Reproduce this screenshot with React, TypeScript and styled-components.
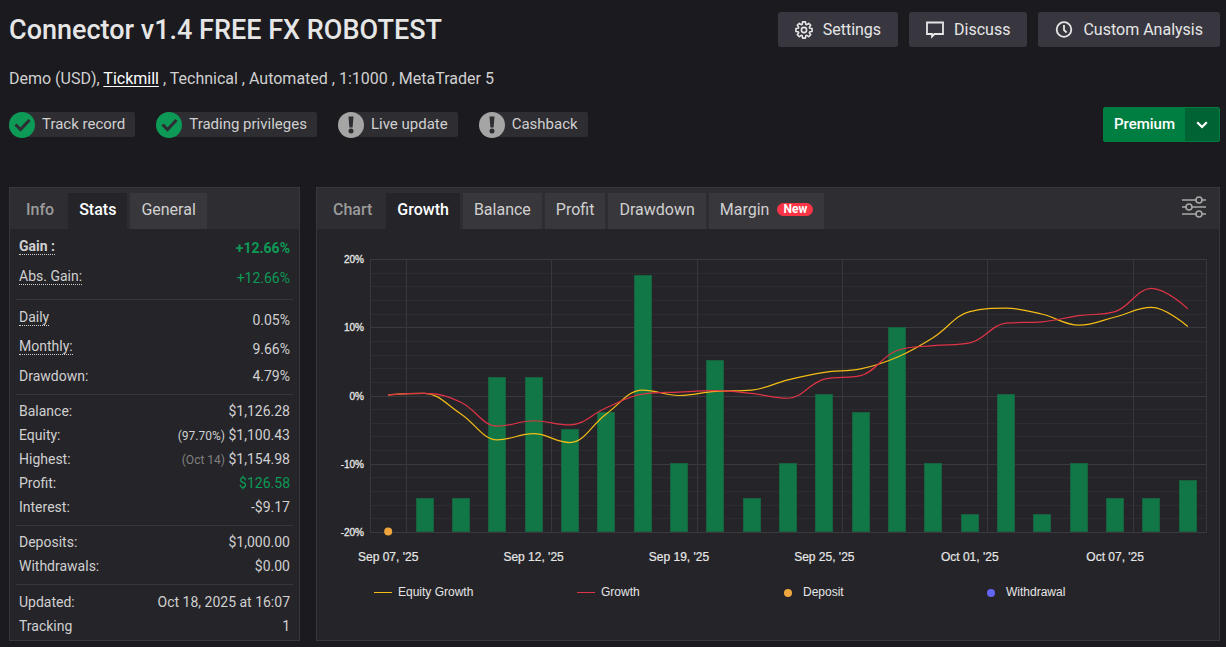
import React from "react";
import styled, { createGlobalStyle } from "styled-components";

const color = {
  page: "#1b1a1f",
  panel: "#252429",
  bar: "#2e2d32",
  tab: "#38373c",
  line: "#38373c",
  button: "#383740",
  text: "#d0d0d0",
  bright: "#e6e6e6",
  muted: "#9b9b9b",
  dim: "#808080",
  green: "#0c9a56",
  yellow: "#f5bd16",
  red: "#e03345",
  orange: "#f0a63e",
  violet: "#6464f5",
};

const GlobalStyle = createGlobalStyle`
  * { box-sizing: border-box; }
  body {
    margin: 0;
    background: ${color.page};
    color: ${color.text};
    font-family: Roboto, "Liberation Sans", sans-serif;
    font-size: 16px;
  }
  button { font: inherit; color: inherit; border: 0; margin: 0; cursor: pointer; }
`;

const Page = styled.div`
  padding: 12px 6px 6px 9px;
`;

const HeaderRow = styled.header`
  display: flex;
  justify-content: space-between;
  align-items: center;
  gap: 16px;
`;

const Title = styled.h1`
  margin: 0;
  padding-top: 2px;
  font-size: 27px;
  line-height: 33px;
  font-weight: 500;
  color: ${color.bright};
`;

const Actions = styled.div`
  display: flex;
  gap: 11px;
`;

const ActionButton = styled.button`
  display: flex;
  align-items: center;
  gap: 10px;
  height: 35px;
  padding: 0 17px;
  border-radius: 3px;
  background: ${color.button};
  color: ${color.bright};
  white-space: nowrap;
`;

const Description = styled.p`
  margin: 22px 0 18px;
  line-height: 20px;
`;

const BrokerLink = styled.a`
  color: #ffffff;
  text-underline-offset: 2px;
`;

const StatusRow = styled.div`
  display: flex;
  justify-content: space-between;
  align-items: center;
  margin-bottom: 45px;
`;

const Badges = styled.ul`
  display: flex;
  gap: 21px;
  margin: 0;
  padding: 0;
  list-style: none;
`;

const Badge = styled.li`
  display: flex;
  align-items: center;
  gap: 7px;
  height: 25px;
  padding-right: 10px;
  border-radius: 13px 2px 2px 13px;
  background: ${color.bar};
  font-size: 15px;
  line-height: 24px;
  white-space: nowrap;
`;

const BadgeText = styled.span`
  padding-bottom: 1px;
`;

const Split = styled.div`
  display: flex;
  height: 35px;
  border: 1px solid #007d40;
  border-radius: 2px;
  background: #007d40;
  color: #ffffff;
  font-size: 15px;
  font-weight: 500;
`;

const SplitMain = styled.button`
  padding: 0 10px 2px;
  background: transparent;
`;

const SplitToggle = styled.button`
  display: flex;
  align-items: center;
  justify-content: center;
  width: 34px;
  padding: 0;
  background: #006334;
`;

const Panels = styled.main`
  display: flex;
  gap: 16px;
  align-items: stretch;
`;

const Panel = styled.section<{ $fixed?: boolean }>`
  flex: ${(p) => (p.$fixed ? "0 0 291px" : "1 1 0")};
  min-width: 0;
  border: 1px solid ${color.line};
  background: ${color.panel};
`;

const TabBar = styled.div`
  display: flex;
  align-items: flex-end;
  gap: 3px;
  height: 41px;
  padding: 0 13px 0 5px;
  background: ${color.bar};
`;

const Tab = styled.button<{ $kind?: "title" | "active" }>`
  display: flex;
  align-items: center;
  gap: 8px;
  height: 36px;
  padding: 0 11px 4px;
  white-space: nowrap;
  font-weight: ${(p) => (p.$kind ? 500 : 400)};
  background: ${(p) =>
    p.$kind === "title" ? "transparent" : p.$kind === "active" ? color.panel : color.tab};
  color: ${(p) =>
    p.$kind === "title" ? color.muted : p.$kind === "active" ? "#ffffff" : color.text};
`;

const NewTag = styled.span`
  padding: 0 6px;
  border-radius: 7px;
  background: #fb3545;
  color: #ffffff;
  font-size: 12px;
  line-height: 13px;
  font-weight: 700;
`;

const IconButton = styled.button`
  display: flex;
  align-self: center;
  margin-left: auto;
  padding: 0 0 4px;
  background: transparent;
  color: #a9a9a9;
`;

const Group = styled.dl<{ $top: number; $bottom: number }>`
  margin: 0 6px;
  padding: ${(p) => p.$top}px 3px ${(p) => p.$bottom}px;
  font-size: 14px;
  & + & { border-top: 1px solid ${color.line}; }
`;

const Row = styled.div<{ $height: number; $strong?: boolean }>`
  display: flex;
  justify-content: space-between;
  align-items: center;
  height: ${(p) => p.$height}px;
  font-weight: ${(p) => (p.$strong ? 700 : 400)};
`;

const Label = styled.dt<{ $hint?: boolean }>`
  line-height: 16px;
  border-bottom: ${(p) => (p.$hint ? `1px dotted ${color.text}` : "0")};
`;

const Value = styled.dd<{ $low?: boolean; $gain?: boolean }>`
  margin: 0;
  padding-top: ${(p) => (p.$low ? 4 : 0)}px;
  color: ${(p) => (p.$gain ? color.green : "inherit")};
`;

const Note = styled.span<{ $dim?: boolean }>`
  font-size: 12px;
  color: ${(p) => (p.$dim ? color.dim : "inherit")};
`;

const ChartSvg = styled.svg`
  display: block;
  width: 100%;
  height: auto;
  font-family: "Liberation Sans", Arial, sans-serif;
`;

const Legend = styled.ul`
  display: grid;
  grid-template-columns: repeat(4, 1fr);
  margin: 0;
  padding: 0 33px 0 57px;
  list-style: none;
  font-family: "Liberation Sans", Arial, sans-serif;
  font-size: 12px;
  line-height: 17px;
  color: ${color.bright};
`;

const LegendItem = styled.li`
  display: flex;
  align-items: center;
  gap: 6px;
`;

const Mark = styled.span<{ $dot?: boolean; $color: string }>`
  width: ${(p) => (p.$dot ? 8 : 18)}px;
  height: ${(p) => (p.$dot ? 8 : 1)}px;
  border-radius: ${(p) => (p.$dot ? "50%" : "0")};
  margin: ${(p) => (p.$dot ? "0 5px 0 4px" : "0")};
  background: ${(p) => p.$color};
`;

// Eight-toothed cog outline, built from alternating root and tip radii.
const gearPath = (() => {
  const parts: string[] = [];
  const at = (r: number, deg: number) => {
    const a = (deg * Math.PI) / 180;
    return `${(9 + r * Math.cos(a)).toFixed(2)} ${(9 + r * Math.sin(a)).toFixed(2)}`;
  };
  for (let i = 0; i < 8; i++) {
    const a = i * 45;
    parts.push(at(6, a - 17), at(8.2, a - 10), at(8.2, a + 10), at(6, a + 17));
  }
  return `M${parts.join("L")}Z`;
})();

const GearIcon = () => (
  <svg width="18" height="18" viewBox="0 0 18 18" fill="none" stroke="currentColor" strokeWidth="1.6" strokeLinejoin="round">
    <path d={gearPath} />
    <circle cx="9" cy="9" r="2.6" />
  </svg>
);

const DiscussIcon = () => (
  <svg width="18" height="18" viewBox="0 0 18 18" fill="none" stroke="currentColor" strokeWidth="1.8">
    <path d="M1 1.500h16v11.500H8.500L6 15.500V13H1z" />
  </svg>
);

const ClockIcon = () => (
  <svg width="18" height="18" viewBox="0 0 18 18" fill="none" stroke="currentColor" strokeWidth="1.8">
    <circle cx="9" cy="8.500" r="7.300" />
    <path d="M9 4v5l2.600 2.500" />
  </svg>
);

const CheckIcon = () => (
  <svg width="26" height="26" viewBox="0 0 26 26">
    <circle cx="13" cy="13" r="13" fill={color.green} />
    <path d="M6.500 12.500l5 5 9-9.500" fill="none" stroke={color.bar} strokeWidth="3" />
  </svg>
);

const AlertIcon = () => (
  <svg width="26" height="26" viewBox="0 0 26 26">
    <circle cx="13" cy="13" r="13" fill="#a5a5a5" />
    <path d="M10.500 4.500h5l-.9 11h-3.200z" fill={color.bar} />
    <circle cx="13" cy="19" r="2.500" fill={color.bar} />
  </svg>
);

const ChevronIcon = () => (
  <svg width="12" height="8" viewBox="0 0 12 8" fill="none" stroke="currentColor" strokeWidth="2.2">
    <path d="M1.200 1.200L6 6l4.800-4.800" />
  </svg>
);

const SlidersIcon = () => (
  <svg width="24" height="22" viewBox="0 0 24 22" fill="none" stroke="currentColor" strokeWidth="1.6">
    <path d="M0 4h14M20 4h4M0 11h4M10 11h14M0 18h14M20 18h4" />
    <circle cx="17" cy="4" r="3" />
    <circle cx="7" cy="11" r="3" />
    <circle cx="17" cy="18" r="3" />
  </svg>
);

type Stat = {
  label: string;
  value: string;
  hint?: boolean;
  gain?: boolean;
  strong?: boolean;
  note?: string;
  dimNote?: boolean;
};

const groups: { row: number; top: number; bottom: number; rows: Stat[] }[] = [
  {
    row: 30,
    top: 2,
    bottom: 8,
    rows: [
      { label: "Gain :", value: "+12.66%", hint: true, gain: true, strong: true },
      { label: "Abs. Gain:", value: "+12.66%", hint: true, gain: true },
    ],
  },
  {
    row: 29,
    top: 3,
    bottom: 4,
    rows: [
      { label: "Daily", value: "0.05%", hint: true },
      { label: "Monthly:", value: "9.66%", hint: true },
      { label: "Drawdown:", value: "4.79%" },
    ],
  },
  {
    row: 24,
    top: 4,
    bottom: 6,
    rows: [
      { label: "Balance:", value: "$1,126.28" },
      { label: "Equity:", value: "$1,100.43", note: "(97.70%)" },
      { label: "Highest:", value: "$1,154.98", note: "(Oct 14)", dimNote: true },
      { label: "Profit:", value: "$126.58", gain: true },
      { label: "Interest:", value: "-$9.17" },
    ],
  },
  {
    row: 24,
    top: 4,
    bottom: 6,
    rows: [
      { label: "Deposits:", value: "$1,000.00" },
      { label: "Withdrawals:", value: "$0.00" },
    ],
  },
  {
    row: 24,
    top: 5,
    bottom: 2,
    rows: [
      { label: "Updated:", value: "Oct 18, 2025 at 16:07" },
      { label: "Tracking", value: "1" },
    ],
  },
];

const plot = { left: 53, right: 889, top: 30, bottom: 303 };
const step = (plot.right - plot.left) / 23;
const centre = (i: number) => plot.left + (i + 0.5) * step;
const toY = (v: number) => plot.bottom - ((v + 20) / 40) * (plot.bottom - plot.top);

const bars = [
  -20, -15, -15, 2.7, 2.7, -4.9, -2.4, 17.6, -9.9, 5.2, -15, -9.9, 0.2, -2.4, 10.1, -9.9, -17.4,
  0.2, -17.4, -9.9, -15, -15, -12.4,
];

const growth = [
  0.1, 0.3, -1, -4.5, -3.7, -4.3, -1.8, 0.2, 0.5, 0.7, 0.3, -0.4, 2.4, 2.9, 6.6, 7.3, 7.7, 10.6,
  10.8, 11.7, 12.3, 15.7, 12.7,
];

const equity = [
  0.1, 0.3, -2.7, -6.5, -5.6, -6.9, -2.7, 0.8, 0, 0.6, 0.8, 2.3, 3.4, 3.9, 5.6, 8.5, 12.3, 12.8,
  11.9, 10.3, 11.5, 12.9, 10.1,
];

// Spline whose control points never overshoot a local minimum or maximum.
function spline(values: number[]) {
  const pts = values.map((v, i) => [centre(i), toY(v)]);
  let out = `M${pts[0][0]} ${pts[0][1]}`;
  let handle = pts[0];
  for (let i = 1; i < pts.length; i++) {
    const [x, y] = pts[i];
    let left = [x, y];
    let right = [x, y];
    if (i < pts.length - 1) {
      const [lx, ly] = pts[i - 1];
      const [nx, ny] = pts[i + 1];
      left = [(1.5 * x + lx) / 2.5, (1.5 * y + ly) / 2.5];
      right = [(1.5 * x + nx) / 2.5, (1.5 * y + ny) / 2.5];
      const fix = ((right[1] - left[1]) * (right[0] - x)) / (right[0] - left[0]) + y - right[1];
      left[1] += fix;
      right[1] += fix;
      const clampedLeft = Math.min(Math.max(left[1], Math.min(ly, y)), Math.max(ly, y));
      if (clampedLeft !== left[1]) {
        left[1] = clampedLeft;
        right[1] = 2 * y - clampedLeft;
      }
      const clampedRight = Math.min(Math.max(right[1], Math.min(ny, y)), Math.max(ny, y));
      if (clampedRight !== right[1]) {
        right[1] = clampedRight;
        left[1] = 2 * y - clampedRight;
      }
    }
    out += ` C${handle[0]} ${handle[1]} ${left[0]} ${left[1]} ${x} ${y}`;
    handle = right;
  }
  return out;
}

const dates = ["Sep 07, '25", "Sep 12, '25", "Sep 19, '25", "Sep 25, '25", "Oct 01, '25", "Oct 07, '25"];
const minor = Array.from({ length: 21 }, (_, i) => -20 + i * 2);

const GrowthChart = () => (
  <ChartSvg viewBox="0 0 902 355" role="img" aria-label="Growth chart">
    <g shapeRendering="crispEdges" fill="none">
      {minor.map((v) => (
        <path
          key={v}
          d={`M${plot.left} ${Math.round(toY(v)) + 0.5}H${plot.right}`}
          stroke={v % 10 === 0 ? "#3a393e" : "#2d2c31"}
        />
      ))}
      {dates.map((d, i) => (
        <path
          key={d}
          d={`M${Math.floor(plot.left + (1 + i * 4) * step) + 0.5} ${plot.top}V${plot.bottom}`}
          stroke="#38373c"
        />
      ))}
      <path d={`M${plot.left + 0.5} ${plot.top}V${plot.bottom}M${plot.right + 0.5} ${plot.top}V${plot.bottom + 1}`} stroke="#38373c" />
    </g>
    {bars.map((v, i) =>
      v > -20 ? (
        <rect
          key={i}
          x={Math.round(centre(i) - 9) + 0.5}
          y={Math.round(toY(v)) + 0.5}
          width="17"
          height={plot.bottom - Math.round(toY(v)) - 1}
          fill="#117746"
          stroke="#176040"
        />
      ) : null
    )}
    <path d={spline(equity)} fill="none" stroke={color.yellow} strokeWidth="1.2" />
    <path d={spline(growth)} fill="none" stroke={color.red} strokeWidth="1.2" />
    <circle cx={centre(0)} cy={plot.bottom - 0.5} r="4" fill={color.orange} />
    <g fill={color.bright} fontSize="10" textAnchor="end" stroke={color.bright} strokeWidth="0.3">
      {[20, 10, 0, -10, -20].map((v) => (
        <text key={v} x={plot.left - 6} y={toY(v) + 4}>{`${v}%`}</text>
      ))}
    </g>
    <g fill={color.bright} fontSize="12" textAnchor="middle" stroke={color.bright} strokeWidth="0.2">
      {dates.map((d, i) => (
        <text key={d} x={centre(i * 4)} y="332">{d}</text>
      ))}
    </g>
  </ChartSvg>
);

export default function App() {
  return (
    <>
      <GlobalStyle />
      <Page>
        <HeaderRow>
          <Title>Connector v1.4 FREE FX ROBOTEST</Title>
          <Actions>
            <ActionButton type="button"><GearIcon />Settings</ActionButton>
            <ActionButton type="button"><DiscussIcon />Discuss</ActionButton>
            <ActionButton type="button"><ClockIcon />Custom Analysis</ActionButton>
          </Actions>
        </HeaderRow>
        <Description>
          Demo (USD), <BrokerLink href="#tickmill">Tickmill</BrokerLink> , Technical , Automated , 1:1000 , MetaTrader 5
        </Description>
        <StatusRow>
          <Badges>
            <Badge><CheckIcon /><BadgeText>Track record</BadgeText></Badge>
            <Badge><CheckIcon /><BadgeText>Trading privileges</BadgeText></Badge>
            <Badge><AlertIcon /><BadgeText>Live update</BadgeText></Badge>
            <Badge><AlertIcon /><BadgeText>Cashback</BadgeText></Badge>
          </Badges>
          <Split>
            <SplitMain type="button">Premium</SplitMain>
            <SplitToggle type="button" aria-label="More premium options"><ChevronIcon /></SplitToggle>
          </Split>
        </StatusRow>
        <Panels>
          <Panel $fixed>
            <TabBar role="tablist">
              <Tab type="button" role="tab" $kind="title">Info</Tab>
              <Tab type="button" role="tab" aria-selected $kind="active">Stats</Tab>
              <Tab type="button" role="tab">General</Tab>
            </TabBar>
            {groups.map((g, i) => (
              <Group key={i} $top={g.top} $bottom={g.bottom}>
                {g.rows.map((r) => (
                  <Row key={r.label} $height={g.row} $strong={r.strong}>
                    <Label $hint={r.hint}>{r.label}</Label>
                    <Value $low={r.hint} $gain={r.gain}>
                      {r.note && <><Note $dim={r.dimNote}>{r.note}</Note>{" "}</>}
                      {r.value}
                    </Value>
                  </Row>
                ))}
              </Group>
            ))}
          </Panel>
          <Panel>
            <TabBar role="tablist">
              <Tab type="button" role="tab" $kind="title">Chart</Tab>
              <Tab type="button" role="tab" aria-selected $kind="active">Growth</Tab>
              <Tab type="button" role="tab">Balance</Tab>
              <Tab type="button" role="tab">Profit</Tab>
              <Tab type="button" role="tab">Drawdown</Tab>
              <Tab type="button" role="tab">Margin <NewTag>New</NewTag></Tab>
              <IconButton type="button" aria-label="Chart options"><SlidersIcon /></IconButton>
            </TabBar>
            <GrowthChart />
            <Legend>
              <LegendItem><Mark $color={color.yellow} />Equity Growth</LegendItem>
              <LegendItem><Mark $color={color.red} />Growth</LegendItem>
              <LegendItem><Mark $dot $color={color.orange} />Deposit</LegendItem>
              <LegendItem><Mark $dot $color={color.violet} />Withdrawal</LegendItem>
            </Legend>
          </Panel>
        </Panels>
      </Page>
    </>
  );
}
